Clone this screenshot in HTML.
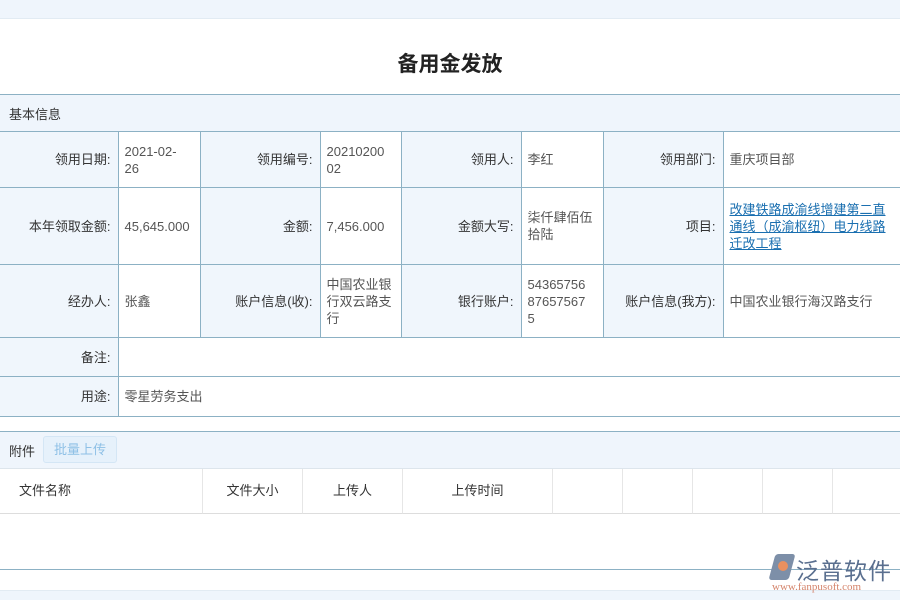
<html><head><style>
body{margin:0;width:900px;height:600px;overflow:hidden;background:#fff;font-family:"Liberation Sans","Noto Sans CJK SC",sans-serif;font-size:13px;color:#333;position:relative}
.a{position:absolute;box-sizing:border-box}
.top{left:0;top:0;width:900px;height:19px;background:#eff5fc;border-bottom:1px solid #e2ebf3}
.title{left:0;top:48px;width:900px;text-align:center;font-size:21px;font-weight:bold;color:#222}
table{position:absolute;border-collapse:collapse;left:0;width:900px}
td{border:1px solid #8cb1c4;padding:0 6px;font-size:13px;line-height:17px;color:#555}
tr td:first-child{border-left:none}
tr td:last-child{border-right:none}
td.l{background:#f0f6fc;text-align:right;color:#333;padding-right:7px}
.sec{left:0;top:94px;width:900px;height:38px;background:#eff5fc;border-top:1px solid #8cb1c4;padding:9px 9px;color:#333}
a{color:#1a6fb0}
.att{left:0;top:431px;width:900px;height:38px;background:#eff5fc;border-top:1px solid #8cb1c4;border-bottom:1px solid #dde5ec}
.btn{left:43px;top:436px;width:74px;height:27px;border:1px solid #d4e6f5;border-radius:3px;background:#e6f1fb;color:#8ec0e6;text-align:center;line-height:25px}
.th{top:469px;height:45px;border-right:1px solid #e6e6e6;border-bottom:1px solid #ddd;line-height:44px;color:#333}
</style></head><body>
<div class="a top"></div>
<div class="a title">备用金发放</div>
<div class="a sec">基本信息</div>
<table style="top:131px">
<col style="width:118px"><col style="width:82px"><col style="width:120px"><col style="width:81px"><col style="width:120px"><col style="width:82px"><col style="width:120px"><col style="width:177px">
<tr style="height:56px"><td class="l">领用日期:</td><td>2021-02-<br>26</td><td class="l">领用编号:</td><td>20210200<br>02</td><td class="l">领用人:</td><td>李红</td><td class="l">领用部门:</td><td>重庆项目部</td></tr>
<tr style="height:77px"><td class="l">本年领取金额:</td><td>45,645.000</td><td class="l">金额:</td><td>7,456.000</td><td class="l">金额大写:</td><td>柒仟肆佰伍<br>拾陆</td><td class="l">项目:</td><td><a href="#">改建铁路成渝线增建第二直通线（成渝枢纽）电力线路迁改工程</a></td></tr>
<tr style="height:73px"><td class="l">经办人:</td><td>张鑫</td><td class="l">账户信息(收):</td><td>中国农业银<br>行双云路支<br>行</td><td class="l">银行账户:</td><td>54365756<br>87657567<br>5</td><td class="l">账户信息(我方):</td><td>中国农业银行海汉路支行</td></tr>
<tr style="height:39px"><td class="l">备注:</td><td colspan="7"></td></tr>
<tr style="height:40px"><td class="l">用途:</td><td colspan="7">零星劳务支出</td></tr>
</table>
<div class="a att"><span style="position:absolute;left:9px;top:9px">附件</span></div>
<div class="a btn">批量上传</div>
<div class="a th" style="left:0;width:203px;padding-left:19px">文件名称</div>
<div class="a th" style="left:203px;width:100px;text-align:center">文件大小</div>
<div class="a th" style="left:303px;width:100px;text-align:center">上传人</div>
<div class="a th" style="left:403px;width:150px;text-align:center">上传时间</div>
<div class="a th" style="left:553px;width:70px"></div>
<div class="a th" style="left:623px;width:70px"></div>
<div class="a th" style="left:693px;width:70px"></div>
<div class="a th" style="left:763px;width:70px"></div>
<div class="a th" style="left:833px;width:67px;border-right:none"></div>
<div class="a" style="left:0;top:569px;width:900px;height:1px;background:#8cb1c4"></div>
<div class="a" style="left:0;top:590px;width:900px;height:10px;background:#eff5fc;border-top:1px solid #e2ebf3"></div>
<div class="a" style="left:772px;top:554px;width:20px;height:26px;background:#7d8fa8;transform:skewX(-15deg);border-radius:3px"></div>
<div class="a" style="left:778px;top:561px;width:10px;height:10px;background:#e9905f;border-radius:50%"></div>
<div class="a" style="left:796px;top:552px;font-size:23px;color:#5a6f8f;letter-spacing:1px">泛普软件</div>
<div class="a" style="left:772px;top:581px;font-size:11px;color:#d4836a;font-family:'Liberation Serif',serif">www.fanpusoft.com</div>
</body></html>
